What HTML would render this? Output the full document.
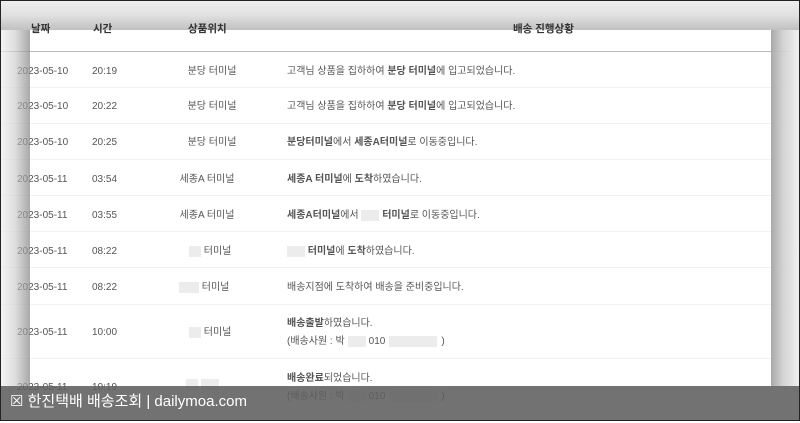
<!DOCTYPE html>
<html><head><meta charset="utf-8"><style>
*{margin:0;padding:0;box-sizing:border-box}
body{width:800px;height:421px;overflow:hidden;background:#fff;font-family:"Liberation Sans","Noto Sans CJK KR",sans-serif;color:#555;font-size:10px;position:relative}
.t{position:absolute;white-space:nowrap;line-height:14px}
.c{transform:translateX(-50%)}
.h{font-weight:bold;color:#333;font-size:10.5px}
.line{position:absolute;left:0;width:792px;height:1px;background:#bbb;top:51px}
.sep{position:absolute;left:0;width:792px;height:1px;background:#f2f2f2}
b{color:#555}
.bx{display:inline-block;background:#ececec;height:11px;vertical-align:middle}
.ov{position:absolute;pointer-events:none}
#r{position:absolute;left:0;top:2px;width:800px;height:421px}
</style></head><body>
<div class="line"></div>
<div id="r">
<div class="sep" style="top:85px"></div>
<div class="sep" style="top:121px"></div>
<div class="sep" style="top:157px"></div>
<div class="sep" style="top:193px"></div>
<div class="sep" style="top:229px"></div>
<div class="sep" style="top:265px"></div>
<div class="sep" style="top:302px"></div>
<div class="sep" style="top:356px"></div>

<div class="t" style="left:17px;top:63px">2023-05-10</div><div class="t" style="left:92px;top:63px">20:19</div><div class="t c" style="left:212px;top:63px">분당 터미널</div><div class="t" style="left:287px;top:63px">고객님 상품을 집하하여 <b>분당 터미널</b>에 입고되었습니다.</div>
<div class="t" style="left:17px;top:98px">2023-05-10</div><div class="t" style="left:92px;top:98px">20:22</div><div class="t c" style="left:212px;top:98px">분당 터미널</div><div class="t" style="left:287px;top:98px">고객님 상품을 집하하여 <b>분당 터미널</b>에 입고되었습니다.</div>
<div class="t" style="left:17px;top:134px">2023-05-10</div><div class="t" style="left:92px;top:134px">20:25</div><div class="t c" style="left:212px;top:134px">분당 터미널</div><div class="t" style="left:287px;top:134px"><b>분당터미널</b>에서 <b>세종A터미널</b>로 이동중입니다.</div>
<div class="t" style="left:17px;top:171px">2023-05-11</div><div class="t" style="left:92px;top:171px">03:54</div><div class="t c" style="left:207px;top:171px">세종A 터미널</div><div class="t" style="left:287px;top:171px"><b>세종A 터미널</b>에 <b>도착</b>하였습니다.</div>
<div class="t" style="left:17px;top:207px">2023-05-11</div><div class="t" style="left:92px;top:207px">03:55</div><div class="t c" style="left:207px;top:207px">세종A 터미널</div><div class="t" style="left:287px;top:207px"><b>세종A터미널</b>에서 <span class="bx" style="width:18px"></span> <b>터미널</b>로 이동중입니다.</div>
<div class="t" style="left:17px;top:243px">2023-05-11</div><div class="t" style="left:92px;top:243px">08:22</div><div class="t" style="left:189px;top:243px"><span class="bx" style="width:12px"></span> 터미널</div><div class="t" style="left:287px;top:243px"><span class="bx" style="width:18px"></span> <b>터미널</b>에 <b>도착</b>하였습니다.</div>
<div class="t" style="left:17px;top:279px">2023-05-11</div><div class="t" style="left:92px;top:279px">08:22</div><div class="t" style="left:179px;top:279px"><span class="bx" style="width:20px"></span> 터미널</div><div class="t" style="left:287px;top:279px">배송지점에 도착하여 배송을 준비중입니다.</div>
<div class="t" style="left:17px;top:324px">2023-05-11</div><div class="t" style="left:92px;top:324px">10:00</div><div class="t" style="left:189px;top:324px"><span class="bx" style="width:12px"></span> 터미널</div>
<div class="t" style="left:287px;top:315px"><b>배송출발</b>하였습니다.</div>
<div class="t" style="left:287px;top:333px">(배송사원 : 박<span class="bx" style="width:18px;margin:0 3px"></span>010<span class="bx" style="width:48px;margin:0 4px"></span>)</div>
<div class="t" style="left:17px;top:379px">2023-05-11</div><div class="t" style="left:92px;top:379px">10:19</div><div class="t" style="left:186px;top:376px"><span class="bx" style="width:12px"></span> <span class="bx" style="width:18px"></span></div>
<div class="t" style="left:287px;top:370px"><b>배송완료</b>되었습니다.</div>
<div class="t" style="left:287px;top:388px">(배송사원 : 박<span class="bx" style="width:18px;margin:0 3px"></span>010<span class="bx" style="width:48px;margin:0 4px"></span>)</div>
</div>
<div class="ov" style="left:0;top:0;width:800px;height:30px;background:linear-gradient(rgba(235,235,235,.8),rgba(200,200,200,.55) 50%,rgba(150,150,150,.6))"></div>
<div class="ov" style="left:0;top:30px;width:30px;height:356px;background:linear-gradient(90deg,rgba(240,240,240,.7),rgba(200,200,200,.6) 50%,rgba(140,140,140,.75))"></div>
<div class="ov" style="left:771px;top:30px;width:29px;height:356px;background:linear-gradient(90deg,rgba(160,160,160,.9),rgba(205,205,205,.9) 40%,rgba(240,240,240,.9))"></div>
<div class="t h" style="left:31px;top:22px">날짜</div>
<div class="t h" style="left:93px;top:22px">시간</div>
<div class="t h" style="left:188px;top:22px">상품위치</div>
<div class="t h" style="left:513px;top:22px">배송 진행상황</div>
<div class="ov" style="left:0;top:386px;width:800px;height:35px;background:rgba(95,95,95,.88)"></div>
<div class="t" style="left:10px;top:393px;color:#fff;font-size:15px;line-height:18px">☒ 한진택배 배송조회 | dailymoa.com</div>
<div class="ov" style="left:0;top:0;width:800px;height:421px;border:1px solid #222"></div>
</body></html>
